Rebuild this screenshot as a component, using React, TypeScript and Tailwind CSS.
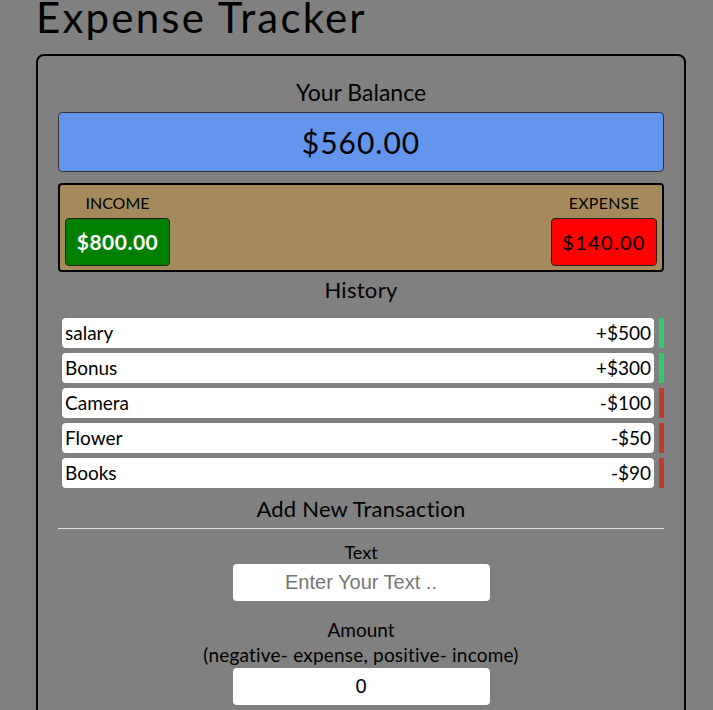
import React from "react";

const items = [
  { t: "salary", a: "+$500", pos: true },
  { t: "Bonus", a: "+$300", pos: true },
  { t: "Camera", a: "-$100", pos: false },
  { t: "Flower", a: "-$50", pos: false },
  { t: "Books", a: "-$90", pos: false },
];

export default function App() {
  return (
    <div className="min-h-[710px] w-full bg-[#808080] text-black font-['Lato','Noto_Sans',sans-serif] overflow-hidden">
      <h1 className="ml-[36px] mt-[-9px] text-[42px] leading-[52px] font-normal tracking-[2.2px]">Expense Tracker</h1>
      <div className="ml-[36px] mr-[27px] mt-[11px] border-2 border-black rounded-[8px] px-[20px] pt-[20px] pb-[30px] flex flex-col">
        <div className="text-center text-[23px] leading-[32px]">Your Balance</div>
        <div className="mt-[4px] h-[60px] bg-[#6495ed] border border-[#333] rounded-[4px] flex items-center justify-center text-[30px] tracking-[1px]">
          $560.00
        </div>
        <div className="mt-[11px] h-[89px] bg-[#a58b5b] border-2 border-black rounded-[4px] px-[5px] pt-[8px] flex justify-between">
          <div className="flex flex-col items-center w-[105px]">
            <div className="text-[16px] leading-[20px]">INCOME</div>
            <div className="mt-[5px] w-[105px] h-[48px] bg-[#008000] border border-[#222] rounded-[4px] flex items-center justify-center text-white font-bold text-[21px] tracking-[0.5px]">
              $800.00
            </div>
          </div>
          <div className="flex flex-col items-center w-[106px]">
            <div className="text-[16px] leading-[20px] tracking-[0.3px]">EXPENSE</div>
            <div className="mt-[5px] w-[106px] h-[48px] bg-[#ff0000] border border-[#222] rounded-[4px] flex items-center justify-center text-[20px] tracking-[1.3px]">
              $140.00
            </div>
          </div>
        </div>
        <div className="mt-[3px] text-center text-[22px] leading-[30px] tracking-[0.3px]">History</div>
        <div className="mt-[13px] flex flex-col gap-[5px] pl-[4px]">
          {items.map((it) => (
            <div key={it.t} className="flex gap-[5px] h-[30px]">
              <div className="flex-1 bg-white rounded-[4px] flex items-center justify-between px-[3px] text-[19px]">
                <span>{it.t}</span>
                <span>{it.a}</span>
              </div>
              <div className={`w-[5px] ${it.pos ? "bg-[#2ecc71]" : "bg-[#c0392b]"}`} />
            </div>
          ))}
        </div>
        <div className="mt-[5px] text-center text-[22px] leading-[32px] tracking-[0.2px]">Add New Transaction</div>
        <div className="mt-[3px] h-px bg-[#dddddd]" />
        <div className="mt-[11px] text-center text-[18px] leading-[24px]">Text</div>
        <div className="flex justify-center">
          <input
            className="w-[257px] h-[37px] bg-white rounded-[4px] text-center text-[20px] font-['Liberation_Sans',sans-serif] placeholder:text-[#757575] outline-none"
            placeholder="Enter Your Text .."
          />
        </div>
        <div className="mt-[17px] text-center text-[19px] leading-[24px]">Amount</div>
        <div className="text-center text-[19px] leading-[26px] tracking-[0.2px]">(negative- expense, positive- income)</div>
        <div className="flex justify-center">
          <input
            className="w-[257px] h-[37px] bg-white rounded-[4px] text-center text-[20px] font-['Liberation_Sans',sans-serif] outline-none"
            defaultValue="0"
          />
        </div>
      </div>
    </div>
  );
}
